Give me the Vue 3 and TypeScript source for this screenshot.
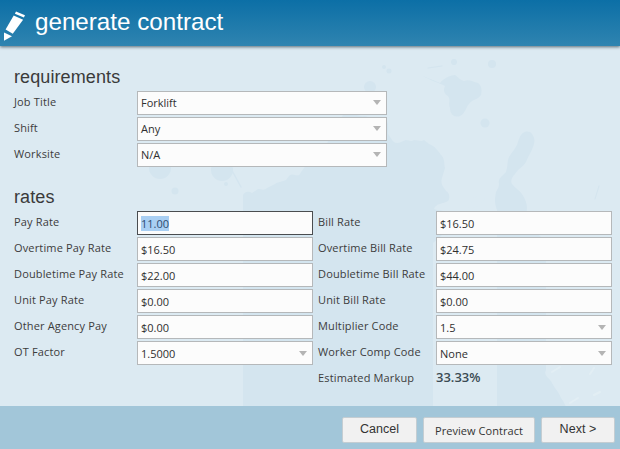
<script setup lang="ts">
interface Field {
  label: string;
  value: string;
  select?: boolean;
  focused?: boolean;
}

const requirements: Field[] = [
  { label: 'Job Title', value: 'Forklift', select: true },
  { label: 'Shift', value: 'Any', select: true },
  { label: 'Worksite', value: 'N/A', select: true },
];

const payRates: Field[] = [
  { label: 'Pay Rate', value: '11.00', focused: true },
  { label: 'Overtime Pay Rate', value: '$16.50' },
  { label: 'Doubletime Pay Rate', value: '$22.00' },
  { label: 'Unit Pay Rate', value: '$0.00' },
  { label: 'Other Agency Pay', value: '$0.00' },
  { label: 'OT Factor', value: '1.5000', select: true },
];

const billRates: Field[] = [
  { label: 'Bill Rate', value: '$16.50' },
  { label: 'Overtime Bill Rate', value: '$24.75' },
  { label: 'Doubletime Bill Rate', value: '$44.00' },
  { label: 'Unit Bill Rate', value: '$0.00' },
  { label: 'Multiplier Code', value: '1.5', select: true },
  { label: 'Worker Comp Code', value: 'None', select: true },
];
</script>

<template>
  <div class="page">
    <!-- paint splatter behind the form, coordinates are page pixels -->
    <svg class="splats" width="620" height="449" viewBox="0 0 620 449">
      <g fill="#d4e5ef">
        <path d="M423 76c5 2 12 5 17 7 3-4 10-8 15-8 4 3 5 5 9 6 5-2 9 1 14 2 4 3 4 8 3 12-3 5-9 4-12 9-3 3-4 10-9 12-6 2-10-2-10-8-2-5 1-8-2-12-4-2-5-6-3-10-6-3-15-6-22-10z" />
        <path d="M243 195c2-4 6-4 9-2l6-4c3 0 6 2 9-1l8-4c4-3 8-2 11-4l3-4c4-4 8 2 11-2 3-6 8-8 7-16 3-2 7-1 9 1 4-3 5-8 8-11 3-6 8-10 6-17-2-7 10-8 14-18 8-1 13 4 21 3l14 4c2-3 6-4 7-1 3 4 2 10 2 15 3 4 5 9 9 9 3 0 5-2 9-3 3 0 5 2 8 0 5 0 7 2 10 0 2 2 3 2 5 4 6 2 9 7 13 12 3 4 2 9 3 12l-3 10c-2 7 2 9 4 13 4 2 4 8 2 10-5 3-12 2-14 8 3 2 12 0 12 6 0 5 2 14-4 20l-9 8v175H243z" />
        <path d="M497 210c-3-8-2-12-1-18 2-4 3-5 3-8-1-4 1-6 3-8l4-4c2-6 1-10 3-15 3-5 6-8 8-12 2-6 3-10 6-12 3-2 7-2 9 1 3 4 3 8 1 13-2 6-5 9-7 15-3 5-8 7-11 12-3 3-5 7-3 10 3 4 7 6 10 10 3 5 5 9 5 14 0 4-1 8-1 14l20 20v128c-3 6 4 8 6 13 3 6 7 9 9 15 3 4 4 7 6 11H497z" />
        <circle cx="370" cy="87" r="6" />
        <circle cx="485" cy="123" r="4.5" />
        <circle cx="492" cy="64" r="4" />
        <circle cx="454" cy="62" r="3" />
        <circle cx="384" cy="67" r="2" />
        <circle cx="389" cy="71" r="2.5" />
        <circle cx="222" cy="170" r="11" />
        <circle cx="160" cy="168" r="11" />
        <circle cx="175" cy="191" r="3.5" />
        <circle cx="226" cy="184" r="2" />
      </g>
      <g fill="none" stroke="#d4e5ef" stroke-linecap="round">
        <path d="M428 68l14-2" stroke-width="1" />
        <path d="M599 186l-4 13" stroke-width="1" />
        <path d="M229 165l12 22" stroke-width="1.5" />
      </g>
      <path d="M560 367l-8 5M594 368l-4 6M600 392l-6 3M578 398l-8 5" stroke="#e2eef4" stroke-width="2" stroke-linecap="round" />
      <path d="M473 198c4-1 6-3 9-4 3 2 3 5 1 8-3 3-8 5-12 7-3 0-3-2-1-4 1-3 2-5 3-7z" fill="#dceaf2" />
    </svg>

    <header class="header">
      <svg class="pencil" width="28" height="46" viewBox="0 0 28 46">
        <path d="M16 11.5l9 3.7-1.1 2.3-9-3.8z" fill="#fff" />
        <path d="M13.7 15.6l9.4 4.2L12.8 33.8 5.6 29.5z" fill="#fff" />
        <path d="M4 32.6l8 3.6L4 40.8z" fill="#fff" />
      </svg>
      <h1 class="title">generate contract</h1>
    </header>

    <main class="content">
      <section class="requirements">
        <h2 class="heading">requirements</h2>
        <div class="form req">
          <template v-for="f in requirements" :key="f.label">
            <span class="label">{{ f.label }}</span>
            <div class="field">
              <span>{{ f.value }}</span>
              <i class="arrow" />
            </div>
          </template>
        </div>
      </section>

      <section class="rates">
        <h2 class="heading">rates</h2>
        <div class="columns">
          <div class="form left">
            <template v-for="f in payRates" :key="f.label">
              <span class="label">{{ f.label }}</span>
              <div class="field" :class="{ focused: f.focused }">
                <span :class="{ selected: f.focused }">{{ f.value }}</span>
                <i v-if="f.select" class="arrow" />
              </div>
            </template>
          </div>
          <div class="form right">
            <template v-for="f in billRates" :key="f.label">
              <span class="label">{{ f.label }}</span>
              <div class="field">
                <span>{{ f.value }}</span>
                <i v-if="f.select" class="arrow" />
              </div>
            </template>
            <span class="label markup-label">Estimated Markup</span>
            <strong class="markup">33.33%</strong>
          </div>
        </div>
      </section>
    </main>

    <footer class="footer">
      <button class="btn arial cancel">Cancel</button>
      <button class="btn preview">Preview Contract</button>
      <button class="btn arial next">Next &gt;</button>
    </footer>
  </div>
</template>

<style>
html,
body {
  margin: 0;
  overflow: hidden;
}
</style>

<style scoped>
.page {
  position: relative;
  width: 620px;
  height: 449px;
  display: flex;
  flex-direction: column;
  background: #dceaf2;
  font-family: "Open Sans", "Noto Sans", sans-serif;
  color: #3a3a3a;
  overflow: hidden;
}
.splats {
  position: absolute;
  left: 0;
  top: 0;
}
.header {
  height: 46px;
  flex: none;
  display: flex;
  align-items: center;
  background: linear-gradient(#0c6fa6, #2f84b0);
  box-shadow: 0 1px 3px rgba(20, 40, 50, 0.65);
  position: relative;
  z-index: 2;
}
.pencil {
  flex: none;
}
.title {
  margin: 0 0 0 7px;
  font: 400 24.2px/46px "Liberation Sans", Arial, sans-serif;
  color: #fff;
  position: relative;
  top: -1px;
}
.content {
  flex: 1;
  position: relative;
  padding: 20px 0 0 14px;
  box-sizing: border-box;
}
.rates {
  margin-top: 19px;
}
.heading {
  margin: 0;
  font: 400 18px/22px "Liberation Sans", Arial, sans-serif;
  letter-spacing: 0.1px;
  color: #3a3a3a;
}
.form {
  display: grid;
  grid-auto-rows: 24px;
  row-gap: 2px;
  align-items: center;
  margin-top: 3px;
}
.req {
  grid-template-columns: 123px 250px;
}
.columns {
  display: flex;
}
.left {
  grid-template-columns: 123px 176px;
}
.right {
  grid-template-columns: 118px 176px;
  margin-left: 5px;
}
.label {
  font-size: 11px;
  letter-spacing: 0.15px;
  color: #3c3c3c;
  position: relative;
  top: -2px;
}
.field {
  height: 24px;
  box-sizing: border-box;
  border: 1px solid #b5b8ba;
  background: #fcfcfc;
  display: flex;
  align-items: center;
  justify-content: space-between;
  padding: 0 0 0 3px;
  font-size: 11px;
  color: #2f2f2f;
}
.req .field {
  padding-bottom: 2px;
}
.focused {
  border-color: #4a4d50;
}
.selected {
  background: #a9cff3;
  color: #2e4c70;
}
.arrow {
  width: 0;
  height: 0;
  margin-right: 5px;
  border-left: 4px solid transparent;
  border-right: 4px solid transparent;
  border-top: 5px solid #b4b4b4;
}
.markup {
  font-size: 13px;
  font-weight: 600;
  color: #3a4a52;
  position: relative;
  top: -2px;
}
.footer {
  height: 43px;
  flex: none;
  position: relative;
  display: flex;
  justify-content: flex-end;
  box-sizing: border-box;
  padding: 11px 5px 0 0;
  gap: 6px;
  background: #a2c6d9;
}
.btn {
  height: 26px;
  box-sizing: border-box;
  border: 1px solid #c4cdd2;
  border-radius: 2px;
  background: #f1f1f1;
  font-family: "Open Sans", sans-serif;
  font-size: 11px;
  letter-spacing: 0.05px;
  color: #333;
  padding: 1px 0 0;
}
.arial {
  font-family: "Liberation Sans", Arial, sans-serif;
  font-size: 12.5px;
  padding: 0 0 2px;
}
.cancel {
  width: 75px;
}
.preview {
  width: 112px;
}
.next {
  width: 74px;
}
</style>
